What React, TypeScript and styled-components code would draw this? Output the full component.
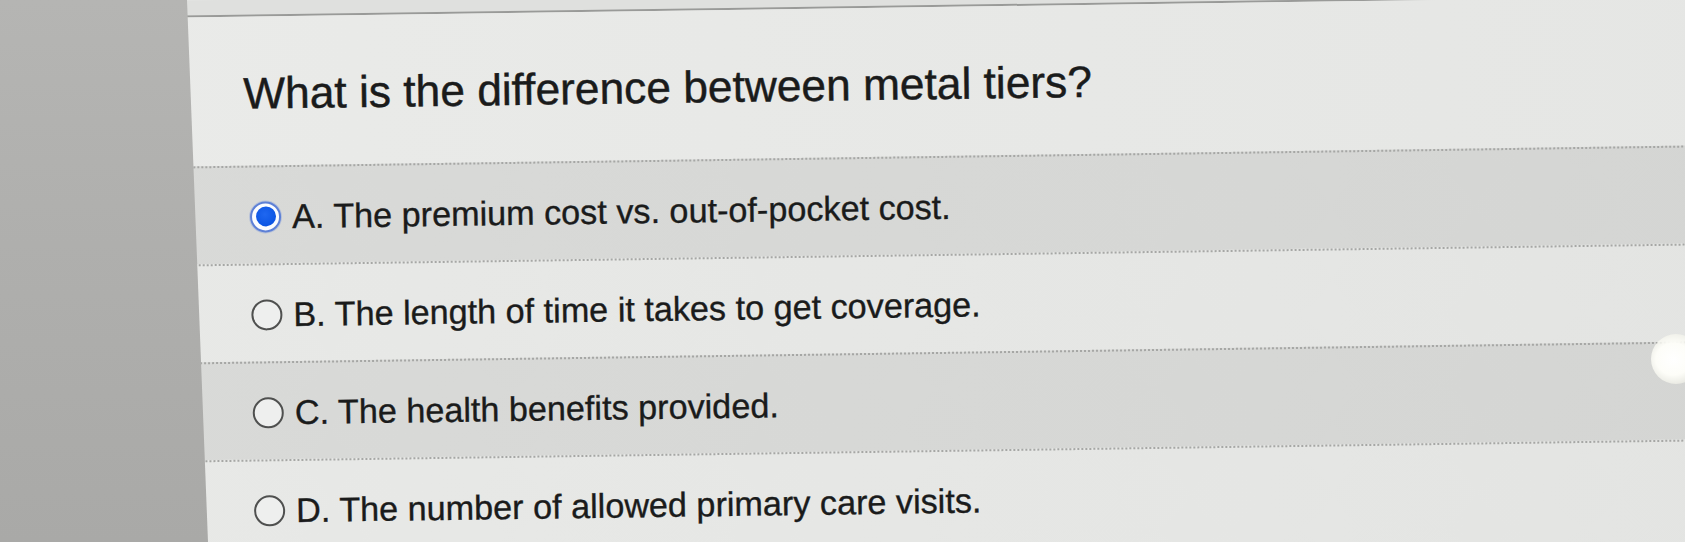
import React from "react";
import styled, { createGlobalStyle } from "styled-components";

const GlobalStyle = createGlobalStyle`
  html, body {
    margin: 0;
    padding: 0;
    background: #e6e7e5;
    overflow: hidden;
  }
  * { box-sizing: border-box; }
`;

const Screen = styled.div`
  position: relative;
  width: 1685px;
  height: 542px;
  overflow: hidden;
  background: #e6e7e5;
  font-family: "Liberation Sans", Arial, Helvetica, sans-serif;
`;

const Sheet = styled.div`
  display: flex;
  flex-direction: column;
  width: 1800px;
  height: 640px;
  transform: rotate(-0.8deg);
  transform-origin: 220px 0;
`;

const TopBar = styled.div`
  height: 17px;
  flex: none;
  background: #dfe0de;
  border-bottom: 2px solid #999a98;
`;

const Header = styled.div`
  height: 149px;
  flex: none;
  display: flex;
  align-items: center;
  padding-left: 242px;
  padding-top: 5px;
  background: linear-gradient(90deg, #eaebe9 0%, #e7e8e6 60%, #e5e6e4 100%);
`;

const Question = styled.h1`
  margin: 0;
  font-size: 44.3px;
  font-weight: 400;
  line-height: 1;
  color: #1a1b1b;
  -webkit-text-stroke: 0.45px #1a1b1b;
`;

const OptionList = styled.div`
  display: flex;
  flex-direction: column;
  flex: 1;
`;

const OptionRow = styled.label<{ $shaded: boolean; $last?: boolean }>`
  display: flex;
  align-items: center;
  gap: 11px;
  height: ${(p) => (p.$last ? "200px" : "98px")};
  flex: none;
  padding-left: 247px;
  padding-top: 2px;
  padding-bottom: ${(p) => (p.$last ? "102px" : "0")};
  background: ${(p) =>
    p.$shaded
      ? "linear-gradient(90deg, #d9dad8 0%, #d6d7d5 70%, #d4d5d3 100%)"
      : "linear-gradient(90deg, #e8e9e7 0%, #e5e6e4 70%, #e3e4e2 100%)"};
  border-top: 2px dotted #a6a7a5;
  cursor: pointer;
`;

const RadioOuter = styled.span<{ $checked: boolean }>`
  flex: none;
  width: 31px;
  height: 31px;
  border-radius: 50%;
  display: flex;
  align-items: center;
  justify-content: center;
  border: 2px solid ${(p) => (p.$checked ? "#5d80d6" : "#4f504f")};
  background: ${(p) => (p.$checked ? "#fbfcff" : "#eeefee")};
  box-shadow: ${(p) => (p.$checked ? "0 0 0 1px rgba(120,150,220,0.35)" : "none")};
`;

const RadioDot = styled.span`
  width: 20px;
  height: 20px;
  border-radius: 50%;
  background: radial-gradient(circle at 45% 40%, #1f67f0 0%, #0c55e4 70%, #0a4cd2 100%);
`;

const OptionText = styled.span`
  font-size: 34.2px;
  line-height: 1;
  color: #1a1b1b;
  -webkit-text-stroke: 0.35px #1a1b1b;
  white-space: nowrap;
`;

const SideStrip = styled.div`
  position: absolute;
  left: 0;
  top: 0;
  width: 210px;
  height: 542px;
  background: linear-gradient(180deg, #b5b5b3 0%, #afafad 45%, #a9a9a7 100%);
  clip-path: polygon(0 0, 187px 0, 208px 100%, 0 100%);
`;

const Glare = styled.div`
  position: absolute;
  right: -16px;
  top: 334px;
  width: 50px;
  height: 50px;
  border-radius: 50%;
  background: radial-gradient(ellipse at 45% 50%, #ffffff 0%, #fdfdf8 45%, rgba(250,250,240,0.6) 70%, rgba(240,240,235,0) 100%);
`;

type Option = { id: string; letter: string; text: string };

const options: Option[] = [
  { id: "a", letter: "A", text: "The premium cost vs. out-of-pocket cost." },
  { id: "b", letter: "B", text: "The length of time it takes to get coverage." },
  { id: "c", letter: "C", text: "The health benefits provided." },
  { id: "d", letter: "D", text: "The number of allowed primary care visits." },
];

export default function App() {
  const [selected, setSelected] = React.useState("a");
  return (
    <>
      <GlobalStyle />
      <Screen>
        <Sheet>
          <TopBar />
          <Header>
            <Question>What is the difference between metal tiers?</Question>
          </Header>
          <OptionList role="radiogroup">
            {options.map((o, i) => (
              <OptionRow
                key={o.id}
                $shaded={i % 2 === 0}
                $last={i === options.length - 1}
                onClick={() => setSelected(o.id)}
              >
                <RadioOuter $checked={selected === o.id} role="radio" aria-checked={selected === o.id}>
                  {selected === o.id && <RadioDot />}
                </RadioOuter>
                <OptionText>
                  {o.letter}. {o.text}
                </OptionText>
              </OptionRow>
            ))}
          </OptionList>
        </Sheet>
        <SideStrip />
        <Glare />
      </Screen>
    </>
  );
}
